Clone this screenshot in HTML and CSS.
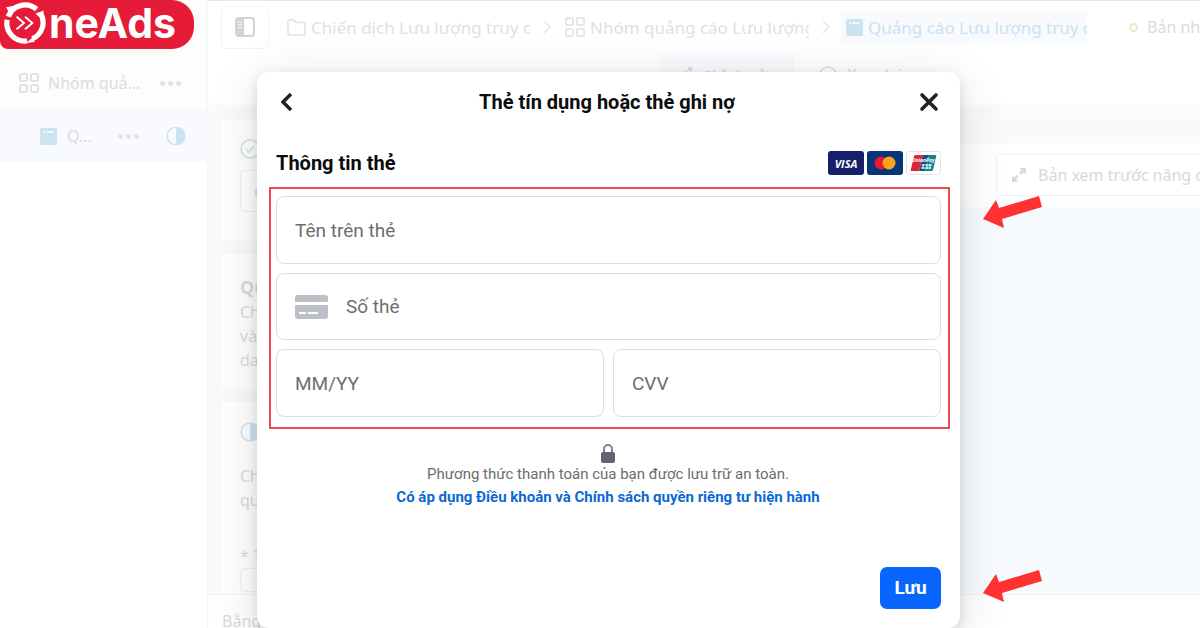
FILE: index.html
```html
<!DOCTYPE html>
<html lang="vi">
<head>
<meta charset="utf-8">
<meta name="viewport" content="width=device-width, initial-scale=1">
<title>OneAds</title>
<link rel="stylesheet" href="styles.css">
</head>
<body>
<svg class="defs" aria-hidden="true">
  <symbol id="grid" viewBox="0 0 20 20"><g fill="none" stroke="currentColor" stroke-width="1.6"><rect x="1" y="1" width="7" height="7" rx="1"/><rect x="12" y="1" width="7" height="7" rx="1"/><rect x="1" y="12" width="7" height="7" rx="1"/><rect x="12" y="12" width="7" height="7" rx="1"/></g></symbol>
  <symbol id="ad" viewBox="0 0 17 17"><rect width="17" height="17" rx="2" fill="currentColor"/><path d="M3 4h2M6.500 4h7" stroke="#fff" stroke-width="1.5"/></symbol>
  <symbol id="half" viewBox="0 0 20 20"><circle cx="10" cy="10" r="8.800" fill="none" stroke="currentColor" stroke-width="1.600"/><path d="M10 1a9 9 0 0 1 0 18z" fill="currentColor"/></symbol>
  <symbol id="next" viewBox="0 0 8 14"><path d="M1 1l6 6-6 6" fill="none" stroke="currentColor" stroke-width="1.600"/></symbol>
  <symbol id="arrow" viewBox="0 0 60 34"><path d="M0 23L13 4l3 8L56 0l3 11-40 12 2 9z" fill="#ff3131"/></symbol>
</svg>

<div class="app">
  <aside class="side">
    <div class="side-row group">
      <svg class="i20"><use href="#grid"/></svg>
      <span class="side-name">Nhóm quả...</span>
      <span class="dots"><i></i><i></i><i></i></span>
    </div>
    <div class="side-row current">
      <svg class="i17"><use href="#ad"/></svg>
      <span class="side-name">Q...</span>
      <span class="dots"><i></i><i></i><i></i></span>
      <svg class="i20"><use href="#half"/></svg>
    </div>
  </aside>

  <main class="main">
    <header class="topbar">
      <button class="panel-btn" aria-label="Bảng bên">
        <svg width="20" height="20" viewBox="0 0 20 20"><rect x="1" y="1" width="18" height="18" rx="3" fill="#fff" stroke="#d2d3d4" stroke-width="2"/><path d="M2 1h7v18H2z" fill="#d2d3d4"/><path d="M3 5h4M3 8h4M3 11h4" stroke="#fff"/></svg>
      </button>
      <nav class="crumbs">
        <a class="crumb" href="#"><svg width="19" height="17" viewBox="0 0 19 17"><path d="M1 14V2.500Q1 1 2.500 1H7l2 2.500h7.500Q18 3.500 18 5v9.500Q18 16 16.500 16h-14Q1 16 1 14z" fill="none" stroke="currentColor" stroke-width="1.500"/></svg><span>Chiến dịch Lưu lượng truy c</span></a>
        <svg class="next"><use href="#next"/></svg>
        <a class="crumb" href="#"><svg class="i20"><use href="#grid"/></svg><span>Nhóm quảng cáo Lưu lượng</span></a>
        <svg class="next"><use href="#next"/></svg>
        <a class="crumb active" href="#"><svg class="i17"><use href="#ad"/></svg><span>Quảng cáo Lưu lượng truy c</span></a>
      </nav>
      <span class="status"><i></i>Bản nháp</span>
    </header>
    <div class="tabs">
      <button class="tab on"><svg width="15" height="17" viewBox="0 0 15 17"><path d="M1 16l1-5L8 4l4 4-6 7zM9 3l2-2q1-1 2 0l1 1q1 1 0 2l-1 2z" fill="currentColor"/></svg>Chỉnh sửa</button>
      <button class="tab"><svg width="18" height="18" viewBox="0 0 18 18"><circle cx="9" cy="9" r="8" fill="none" stroke="currentColor" stroke-width="1.500"/></svg>Xem lại</button>
    </div>
    <div class="content">
      <div class="forms">
        <section class="card c1">
          <svg width="20" height="20" viewBox="0 0 20 20" fill="none" stroke="#d3e6df" stroke-width="1.600"><circle cx="10" cy="10" r="9"/><path d="M6 10l3 3 5-6"/></svg>
          <div class="box tall">cá</div>
        </section>
        <section class="card c2">
          <h2>Quảng cáo</h2>
          <p>Chọn<br>và<br>dang</p>
        </section>
        <section class="card c3">
          <svg class="i20"><use href="#half"/></svg>
          <p>Chọn<br>quảng</p>
          <p class="req">* Trang</p>
          <div class="box"></div>
        </section>
      </div>
      <div class="preview">
        <div class="strip"></div>
        <div class="strip two"></div>
        <div class="preview-bar">
          <button class="adv"><svg width="16" height="16" viewBox="0 0 16 16"><path d="M8.500 1H15v6.500l-2.200-2.200L10 8 8 6l2.700-2.800zM1 8.500l2 2L5.500 8l2 2L5 12.800 7.500 15H1z" fill="currentColor"/></svg>Bản xem trước nâng cao</button>
        </div>
        <div class="canvas"></div>
      </div>
    </div>
    <footer class="foot">Bằng cách nhấp</footer>
  </main>

  <div class="overlay">
    <form class="modal" role="dialog" aria-labelledby="t">
      <header class="m-head">
        <button type="button" class="icon-btn" aria-label="Quay lại"><svg width="14" height="20" viewBox="0 0 14 20"><path d="M10 2L2 10l8 8" fill="none" stroke="#202225" stroke-width="3.400"/></svg></button>
        <h1 id="t">Thẻ tín dụng hoặc thẻ ghi nợ</h1>
        <button type="button" class="icon-btn" aria-label="Đóng"><svg width="20" height="20" viewBox="0 0 20 20"><path d="M3 3l14 14M17 3L3 17" stroke="#202225" stroke-width="3.600" stroke-linecap="round"/></svg></button>
      </header>
      <div class="info">
        <h2>Thông tin thẻ</h2>
        <div class="brands">
          <span class="brand visa">VISA</span>
          <span class="brand mc"><svg width="22" height="14" viewBox="0 0 22 14"><circle cx="7" cy="7" r="6.500" fill="#e8192c"/><circle cx="15" cy="7" r="6.500" fill="#f8a51b"/></svg></span>
          <span class="brand up"><svg width="28" height="18" viewBox="0 0 28 18"><path d="M5 1h8L9 17H2Q0 17 1 15L4 2z" fill="#e0243c"/><path d="M13 1h6l-4 16H9z" fill="#16507c"/><path d="M19 1h6q2 0 1 2l-3 13-1 1h-7z" fill="#0b8587"/><path d="M12 11h10M11 14h10M13 10v5M17 10v5M20 10v5" stroke="#fff" stroke-width="1"/></svg><b>UnionPay</b></span>
        </div>
      </div>
      <div class="fields">
        <input class="field wide" aria-label="Tên trên thẻ" placeholder="Tên trên thẻ">
        <label class="field wide number"><svg width="33" height="24" viewBox="0 0 33 24"><path d="M0 7V3q0-3 3-3h27q3 0 3 3v4zM0 10h33v11q0 3-3 3H3q-3 0-3-3z" fill="#bcc0c6"/><path d="M4 18h7M13 18h10" stroke="#fff" stroke-width="2"/></svg><input aria-label="Số thẻ" placeholder="Số thẻ"></label>
        <input class="field" aria-label="MM/YY" placeholder="MM/YY">
        <input class="field" aria-label="CVV" placeholder="CVV">
      </div>
      <div class="secure">
        <svg width="16" height="19" viewBox="0 0 16 19"><path d="M4 9V5a4 4 0 0 1 8 0v4" fill="none" stroke="#7c828b" stroke-width="2"/><rect x="1" y="8" width="14" height="11" rx="2" fill="#5f6670"/></svg>
        <p>Phương thức thanh toán của bạn được lưu trữ an toàn.</p>
        <a href="#">Có áp dụng Điều khoản và Chính sách quyền riêng tư hiện hành</a>
      </div>
      <div class="actions"><button type="button" class="save">Lưu</button></div>
    </form>
  </div>

  <div class="logo">
    <svg width="42" height="42" viewBox="0 0 40 40" fill="none" stroke="#fff"><path d="M4 14A17 17 0 0 1 31 7M35 11A17 17 0 0 1 27 35M22 37A17 17 0 0 1 3 17" stroke-width="5"/><path d="M2 5l10-2-5 11zM38 8l-2 9-6-6zM21 39l7-6 1 5z" fill="#fff" stroke="none"/><path d="M12 14l7 6-7 6M20 14l7 6-7 6" stroke-width="1.800"/></svg>
    <span>neAds</span>
  </div>
  <svg class="arrow a1"><use href="#arrow"/></svg>
  <svg class="arrow a2"><use href="#arrow"/></svg>
</div>
</body>
</html>
```
FILE: styles.css
```css
* { box-sizing: border-box; }
body { margin: 0; font-family: "Noto Sans", sans-serif; background: #fff; }
h1, h2, p { margin: 0; }
button { font: inherit; cursor: pointer; }
a { text-decoration: none; }
svg { flex: none; display: block; }
.defs { position: absolute; width: 0; height: 0; }
.i20 { width: 20px; height: 20px; }
.i17 { width: 17px; height: 17px; }

.app { position: relative; display: flex; min-height: 100vh; overflow: hidden; color: #dadbdc; font-size: 17px; }

.side { flex: none; width: 208px; border-right: 1px solid #f5f6f7; font-size: 16px; }
.side-row { display: flex; align-items: center; }
.group { height: 108px; padding: 58px 26px 0 19px; gap: 9px; background: #fdfdfb; }
.current { height: 54px; padding: 2px 21px 0 40px; gap: 10px; background: #f8fafd; }
.current svg { color: #cee3f2; }
.side-name { flex: 1; white-space: nowrap; }
.dots { display: flex; gap: 3px; }
.current .dots { margin-right: 17px; }
.dots i { width: 5px; height: 5px; border-radius: 50%; background: #e2e3e3; }

.main { flex: 1; min-width: 0; display: flex; flex-direction: column; border-top: 1px solid #e4e5e6; }
.topbar { display: flex; align-items: center; height: 52px; padding-left: 13px; overflow: hidden; white-space: nowrap; }
.panel-btn { display: flex; align-items: center; justify-content: center; flex: none; width: 48px; height: 43px; border: 1px solid #f3f3f4; border-radius: 5px; background: #fff; }
.crumbs { display: flex; align-items: center; margin-left: 18px; }
.crumb { display: flex; align-items: center; gap: 5px; color: #dfe1e3; }
.crumb span { width: 219px; overflow: hidden; }
.next { width: 8px; height: 14px; margin: 0 14px 0 13px; color: #e6e7e8; }
.active { height: 33px; margin-left: -3px; padding-left: 5px; background: #f8fafd; color: #cbe2f2; }
.status { display: flex; align-items: center; gap: 9px; margin-left: 42px; font-size: 16px; }
.status i { width: 9px; height: 9px; border: 2px solid #dbefcb; border-radius: 50%; }
.tabs { display: flex; height: 52px; padding-left: 452px; gap: 6px; }
.tab { display: flex; align-items: center; gap: 10px; height: 43px; padding: 0 18px; border: 0; border-radius: 5px; background: none; color: #dadbdc; font-size: 16px; white-space: nowrap; }
.on { gap: 9px; background: #f8fafd; color: #cbe2f2; font-weight: 700; font-size: 15px; }

.content { flex: 1; display: flex; }
.forms { flex: none; width: 752px; padding: 14px 14px 0 13px; display: flex; flex-direction: column; gap: 13px; background: #f9fafc; }
.card { padding: 20px 19px 0; background: #fff; font-size: 16px; line-height: 24px; }
.c1 { height: 122px; }
.c2 { height: 135px; }
.c2 h2 { font-size: 18px; line-height: 26px; }
.c3 { flex: 1; }
.c3 svg { color: #cee3f2; }
.c3 p { margin-top: 22px; }
.c3 .req { margin-top: 32px; }
.box { height: 24px; border: 1px solid #f1f2f2; border-radius: 4px; }
.tall { height: 42px; margin-top: 11px; padding: 8px 13px; }
.preview { flex: 1; min-width: 0; display: flex; flex-direction: column; }
.strip { height: 14px; background: #f9fafd; }
.two { height: 23px; margin-top: 1px; background: #fafafb; }
.preview-bar { height: 64px; padding: 11px 0 0 36px; overflow: hidden; }
.adv { display: flex; align-items: center; gap: 11px; width: 260px; height: 42px; padding: 0 14px; border: 1px solid #f1f2f3; border-radius: 4px; background: #fff; color: #d8d9da; font-size: 16px; white-space: nowrap; }
.canvas { flex: 1; background: #f8fbfd; }
.foot { height: 34px; padding: 14px; font-size: 16px; line-height: 24px; border-top: 1px solid #f3f4f5; overflow: hidden; }

.overlay { position: absolute; inset: 0; display: flex; justify-content: center; padding: 72px 0 0 17px; }
.modal { display: flex; flex-direction: column; width: 703px; padding: 0 10px 19px 12px; border-radius: 12px; background: #fff; color: #0b0c0e; font-family: Roboto, sans-serif; box-shadow: 0 4px 12px rgba(0, 0, 0, .12), 0 10px 50px rgba(0, 0, 0, .13); }
.m-head { display: flex; align-items: center; justify-content: space-between; height: 59px; padding: 0 11px 0 12px; }
.icon-btn { display: flex; padding: 0; border: 0; background: none; }
h1, .info h2 { font-size: 20px; line-height: 24px; font-weight: 700; }
.info { display: flex; align-items: center; justify-content: space-between; height: 56px; padding: 8px 9px 0 7px; }
.brands { display: flex; gap: 3px; }
.brand { position: relative; display: flex; align-items: center; justify-content: center; width: 36px; height: 24px; border-radius: 3px; }
.visa { background: #171e6c; color: #fff; font: italic 700 11px "Open Sans", sans-serif; }
.mc { background: #06357a; }
.up { width: 35px; border: 1px solid #e0e3e8; background: #fff; }
.up b { position: absolute; top: 5px; left: 5px; color: #fff; font: italic 700 5px/6px "Open Sans", sans-serif; }
.fields { display: grid; grid-template-columns: 1fr 1fr; gap: 9px; padding: 7px 7px 10px 5px; border: 2px solid #e94b4e; }
.field { width: 100%; min-width: 0; height: 68px; padding: 0 18px; border: 1px solid #dcdfde; border-radius: 8px; background: #fff; }
.number { height: 67px; }
.wide { grid-column: 1 / -1; }
input { font: 19px Roboto, sans-serif; color: #202225; }
input::placeholder { color: #6c6e71; opacity: 1; }
.number { display: flex; align-items: center; gap: 18px; }
.number input { flex: 1; min-width: 0; padding: 0; border: 0; outline: 0; }
.secure { display: flex; flex-direction: column; align-items: center; margin-top: 15px; padding-right: 3px; color: #6b6d70; font-size: 15px; line-height: 23px; }
.secure a { color: #0b69d4; font-weight: 700; }
.actions { display: flex; justify-content: flex-end; margin-top: auto; padding-right: 9px; }
.save { width: 61px; height: 42px; padding: 0 0 2px; border: 0; border-radius: 7px; background: #0866ff; color: #fff; font-size: 19px; font-weight: 700; }

.logo { position: absolute; top: 0; left: 0; display: flex; align-items: center; gap: 3px; width: 194px; height: 49px; padding: 0 0 3px 4px; border-radius: 0 22px 22px 8px; background: #e51b38; color: #fff; font: 700 41px/44px Inter, sans-serif; }
.arrow { position: absolute; left: 983px; width: 60px; height: 34px; }
.a1 { top: 196px; }
.a2 { top: 570px; }
```
